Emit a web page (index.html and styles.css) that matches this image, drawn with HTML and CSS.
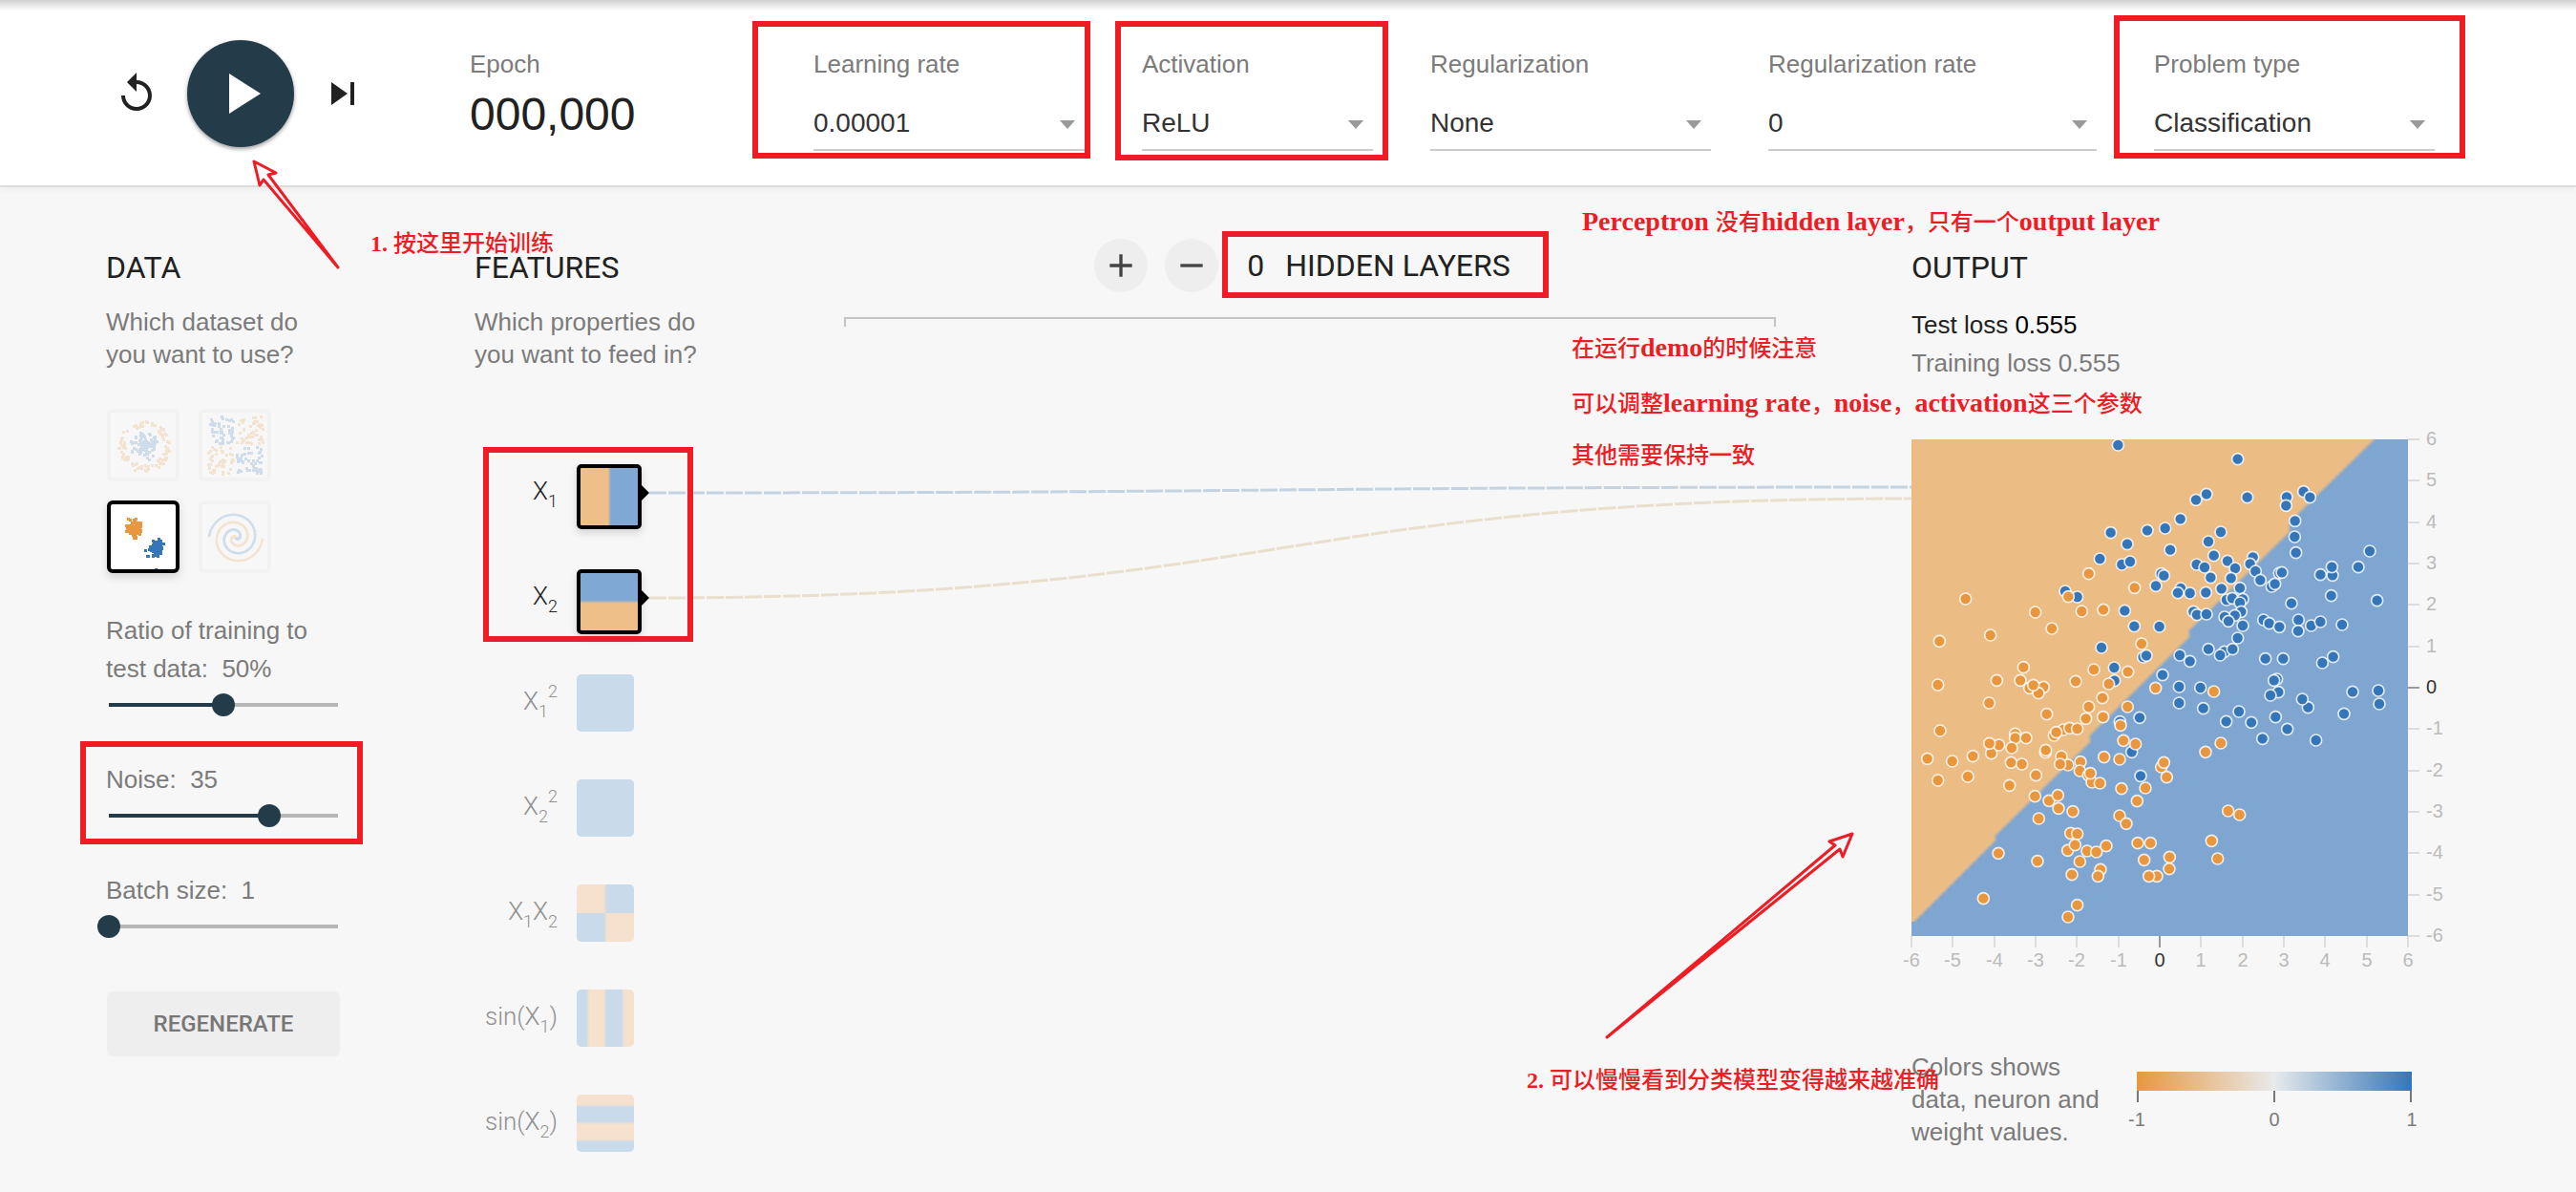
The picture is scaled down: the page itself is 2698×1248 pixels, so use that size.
FILE: index.html
```html
<!DOCTYPE html>
<html lang="en">
<head>
<meta charset="utf-8">
<title>Neural network playground</title>
<link rel="stylesheet" href="styles.css">
</head>
<body>
<header class="controls">
  <div class="player">
    <button class="icon-button" aria-label="Reset"><svg viewBox="0 0 24 24"><path d="M12 5V1L7 6l5 5V7c3.31 0 6 2.69 6 6s-2.69 6-6 6-6-2.69-6-6H4c0 4.42 3.58 8 8 8s8-3.58 8-8-3.58-8-8-8z"/></svg></button>
    <button class="play-button" aria-label="Run"><svg viewBox="0 0 24 24"><path d="M8 5v14l11-7z"/></svg></button>
    <button class="icon-button" aria-label="Step"><svg viewBox="0 0 24 24"><path d="M6 18l8.5-6L6 6v12zM16 6v12h2V6h-2z"/></svg></button>
  </div>
  <div class="field epoch">
    <span class="label">Epoch</span>
    <output class="epoch-value">000,000</output>
  </div>
  <div class="field rate">
    <label class="label" for="learning-rate">Learning rate</label>
    <div class="select"><select id="learning-rate"><option>0.00001</option></select></div>
  </div>
  <div class="field activation">
    <label class="label" for="activation">Activation</label>
    <div class="select"><select id="activation"><option>ReLU</option></select></div>
  </div>
  <div class="field regularization">
    <label class="label" for="regularization">Regularization</label>
    <div class="select"><select id="regularization"><option>None</option></select></div>
  </div>
  <div class="field regularization-rate">
    <label class="label" for="reg-rate">Regularization rate</label>
    <div class="select"><select id="reg-rate"><option>0</option></select></div>
  </div>
  <div class="field problem">
    <label class="label" for="problem">Problem type</label>
    <div class="select"><select id="problem"><option>Classification</option></select></div>
  </div>
</header>

<main class="playground">
  <section class="data">
    <h2 class="title">DATA</h2>
    <p class="hint">Which dataset do<br>you want to use?</p>
    <div class="datasets">
      <button class="dataset" aria-label="Circle"><svg id="data-circle" viewBox="0 0 68 68"></svg></button>
      <button class="dataset" aria-label="Exclusive or"><svg id="data-xor" viewBox="0 0 68 68"></svg></button>
      <button class="dataset selected" aria-label="Gaussian"><svg id="data-gauss" viewBox="0 0 68 68"></svg></button>
      <button class="dataset" aria-label="Spiral"><svg id="data-spiral" viewBox="0 0 68 68"></svg></button>
    </div>
    <div class="slider ratio">
      <label for="ratio">Ratio of training to<br>test data:&nbsp; 50%</label>
      <input id="ratio" type="range" min="0" max="100" value="50" style="--fill: 50%">
    </div>
    <div class="slider">
      <label for="noise">Noise:&nbsp; 35</label>
      <input id="noise" type="range" min="0" max="50" value="35" style="--fill: 70%">
    </div>
    <div class="slider">
      <label for="batch">Batch size:&nbsp; 1</label>
      <input id="batch" type="range" min="1" max="30" value="1" style="--fill: 0%">
    </div>
    <button class="regenerate">REGENERATE</button>
  </section>

  <section class="features">
    <h2 class="title">FEATURES</h2>
    <p class="hint">Which properties do<br>you want to feed in?</p>
    <ul class="feature-list">
      <li class="feature active"><span class="name">X<sub>1</sub></span><button class="node x1" aria-label="X1"></button></li>
      <li class="feature active"><span class="name">X<sub>2</sub></span><button class="node x2" aria-label="X2"></button></li>
      <li class="feature"><span class="name">X<sub>1</sub><sup>2</sup></span><button class="node" aria-label="X1 squared"></button></li>
      <li class="feature"><span class="name">X<sub>2</sub><sup>2</sup></span><button class="node" aria-label="X2 squared"></button></li>
      <li class="feature"><span class="name">X<sub>1</sub>X<sub>2</sub></span><button class="node product" aria-label="X1 times X2"></button></li>
      <li class="feature"><span class="name">sin(X<sub>1</sub>)</span><button class="node sin-x1" aria-label="sin X1"></button></li>
      <li class="feature"><span class="name">sin(X<sub>2</sub>)</span><button class="node sin-x2" aria-label="sin X2"></button></li>
    </ul>
  </section>

  <section class="network">
    <div class="layers">
      <div class="layer-controls">
        <button class="round-button" aria-label="Add layer"><svg viewBox="0 0 24 24"><path d="M19 13h-6v6h-2v-6H5v-2h6V5h2v6h6v2z"/></svg></button>
        <button class="round-button" aria-label="Remove layer"><svg viewBox="0 0 24 24"><path d="M19 13H5v-2h14v2z"/></svg></button>
        <span class="layer-count">0</span>
        <span>HIDDEN LAYERS</span>
      </div>
      <div class="bracket"></div>
    </div>
    <svg class="links" viewBox="0 0 1322 200" preserveAspectRatio="none">
      <path class="link positive" d="M0 56C661 56 661 50 1322 50"/>
      <path class="link negative" d="M0 166C661 166 661 62 1322 62"/>
    </svg>
  </section>

  <section class="output">
    <h2 class="title">OUTPUT</h2>
    <p class="loss test">Test loss <b>0.555</b></p>
    <p class="loss">Training loss 0.555</p>
    <svg class="heatmap" viewBox="0 0 520 520">
      <rect class="region-positive" width="520" height="520"/>
      <path class="region-negative" d="M0 0H485L406 77L396 88V97L291 200V207L187 310V317L88 415V420L3 505H0z"/>
      <path class="boundary" d="M485 0L406 77L396 88V97L291 200V207L187 310V317L88 415V420L3 505"/>
      <g id="axes"></g>
      <g id="points" transform="scale(0.333333)"></g>
    </svg>
    <div class="legend">
      <p class="legend-text">Colors shows<br>data, neuron and<br>weight values.</p>
      <div class="scale">
        <div class="scale-bar"></div>
        <div class="scale-ticks"></div>
        <div class="scale-labels"><span>-1</span><span>0</span><span>1</span></div>
      </div>
    </div>
  </section>
</main>

<div class="notes">
  <svg class="marks" viewBox="0 0 2698 1248">
    <g class="box">
      <rect x="791" y="25" width="348" height="138"/>
      <rect x="1171" y="25" width="280" height="140"/>
      <rect x="2217" y="19" width="362" height="144"/>
      <rect x="1283" y="245" width="336" height="64"/>
      <rect x="509" y="471" width="214" height="198"/>
      <rect x="87" y="779" width="290" height="102"/>
    </g>
    <g class="arrow">
      <path d="M266 169L289 181L281 183L354 280L276 188L272 194z"/>
      <path d="M1940 873L1916 881L1922 885L1683 1086L1927 889L1930 897z"/>
    </g>
  </svg>
  <p class="note note-start"><span class="number">1. </span>按这里开始训练</p>
  <p class="note note-perceptron"><span>Perceptron </span>没有<span>hidden layer</span>，只有一个<span>output layer</span></p>
  <p class="note note-demo">在运行<span>demo</span>的时候注意</p>
  <p class="note note-params">可以调整<span>learning rate</span>，<span>noise</span>，<span>activation</span>这三个参数</p>
  <p class="note note-same">其他需要保持一致</p>
  <p class="note note-result"><span class="number">2. </span>可以慢慢看到分类模型变得越来越准确</p>
</div>
<script src="script.js"></script>
</body>
</html>
```
FILE: styles.css
```css
* { box-sizing: border-box; }

body {
  margin: 0;
  position: relative;
  background: #f7f7f7;
  color: #7b7b7b;
  font-family: "Liberation Sans", Arial, sans-serif;
  font-size: 26px;
  line-height: 34px;
  overflow-x: hidden;
}

h2, p, ul { margin: 0; padding: 0; }
button { border: 0; padding: 0; font: inherit; cursor: pointer; }

/* top bar */
.controls {
  display: flex;
  align-items: flex-start;
  gap: 60px;
  padding: 42px 148px 36px 119px;
  background: linear-gradient(#d0d0d0, #e6e6e6 5px, #fff 12px);
  border-bottom: 2px solid #dcdcdc;
  box-shadow: 0 2px 8px rgba(0, 0, 0, 0.05);
}
.player {
  flex: 313 1 0;
  display: flex;
  align-items: center;
}
.icon-button { flex: none; width: 48px; height: 48px; background: none; }
.icon-button svg { display: block; fill: #212121; }
.play-button {
  flex: none;
  display: grid;
  place-items: center;
  width: 112px;
  height: 112px;
  margin: 0 27px 0 29px;
  border-radius: 50%;
  background: #243b4a;
  box-shadow: 0 2px 4px rgba(0, 0, 0, 0.4);
}
.play-button svg { width: 72px; fill: #fff; }
.field { padding-top: 8px; min-width: 0; }
.epoch { flex: 300 1 0; }
.rate { flex: 284 1 0; }
.activation { flex: 242 1 0; }
.regularization, .problem { flex: 294 1 0; }
.regularization-rate { flex: 344 1 0; }
.label { display: block; white-space: nowrap; }
.epoch-value {
  display: block;
  margin-top: 8px;
  color: #212121;
  font-size: 48px;
  line-height: 56px;
}
.select { position: relative; margin-top: 16px; }
.select select {
  display: block;
  width: 100%;
  height: 58px;
  padding: 0;
  border: 0;
  border-bottom: 2px solid #ccc;
  border-radius: 0;
  appearance: none;
  background: none;
  color: #333;
  font: 28px "Liberation Sans", Arial, sans-serif;
}
.select::after {
  content: "";
  position: absolute;
  top: 26px;
  right: 10px;
  border: 8px solid transparent;
  border-top: 9px solid #999;
  border-bottom: 0;
  pointer-events: none;
}

/* main columns */
.playground {
  display: grid;
  grid-template-columns: 386px 183px 1fr 524px;
  padding: 54px 172px 32px 111px;
}
.title {
  padding-top: 10px;
  color: #212121;
  font: 400 32px/40px Roboto, sans-serif;
}
.hint { margin-top: 20px; white-space: nowrap; }

/* data column */
.datasets {
  display: grid;
  grid-template-columns: 76px 76px;
  gap: 20px;
  margin: 40px 0 0 1px;
}
.dataset {
  width: 76px;
  height: 76px;
  border: 4px solid #f2f2f2;
  border-radius: 6px;
  background: none;
}
.dataset svg { display: block; opacity: 0.2; }
.dataset.selected {
  border-color: #000;
  background: #fff;
  box-shadow: 0 4px 10px rgba(0, 0, 0, 0.15);
}
.dataset.selected svg { opacity: 1; }
.pos { fill: #3576b8; }
.neg { fill: #e8973f; }

.slider { margin-top: 46px; }
.slider.ratio { margin-top: 40px; }
.slider label { display: block; line-height: 40px; }
.slider input {
  display: block;
  width: 264px;
  height: 24px;
  margin: 6px 0 0 -9px;
  appearance: none;
  background: linear-gradient(to right, #243b4a var(--fill), #b6b6b6 var(--fill)) center / calc(100% - 24px) 4px no-repeat;
}
.slider input::-webkit-slider-thumb {
  appearance: none;
  width: 24px;
  height: 24px;
  border-radius: 50%;
  background: #243b4a;
}
.regenerate {
  display: block;
  width: 244px;
  height: 68px;
  margin: 56px 0 0 1px;
  border-radius: 6px;
  background: #eee;
  color: #777;
  font: 500 24px/28px Roboto, sans-serif;
}

/* features column */
.feature-list {
  display: flex;
  flex-direction: column;
  gap: 42px;
  margin-top: 98px;
  list-style: none;
}
.feature {
  display: flex;
  align-items: flex-start;
  height: 68px;
  color: #909090;
}
.name {
  width: 87px;
  margin-right: 20px;
  font-family: Roboto, sans-serif;
  font-weight: 300;
  line-height: 56px;
  text-align: right;
}
.name sub, .name sup { font-size: 18px; line-height: 0; }
.name sub { vertical-align: -8px; }
.name sup { vertical-align: 13px; }
.node {
  width: 60px;
  height: 60px;
  border-radius: 5px;
  background: #c9daea;
}
.feature.active { color: #222; }
.active .node {
  width: 68px;
  height: 68px;
  border: 4px solid #000;
  box-shadow: 0 4px 8px rgba(0, 0, 0, 0.15);
}
.feature.active::after {
  content: "";
  margin-top: 22px;
  border: 8px solid transparent;
  border-left-color: #000;
  border-right: 0;
}
.x1 { background: linear-gradient(to right, #eebf88 48%, #80a8d4 53%); }
.x2 { background: linear-gradient(#80a8d4 47%, #eebf88 53%); }
.product {
  background:
    linear-gradient(to right, #f5e1cd 47%, #c9daea 53%) top / 100% 50% no-repeat,
    linear-gradient(to right, #c9daea 47%, #f5e1cd 53%) bottom / 100% 50% no-repeat;
}
.sin-x1 { background: linear-gradient(to right, #c9daea 17%, #f5e1cd 22%, #f5e1cd 47%, #c9daea 52%, #c9daea 78%, #f5e1cd 83%); }
.sin-x2 { background: linear-gradient(#f5e1cd 17%, #c9daea 22%, #c9daea 47%, #f5e1cd 52%, #f5e1cd 78%, #c9daea 83%); }

/* network column */
.layers { padding: 0 142px 0 204px; }
.layer-controls {
  display: flex;
  align-items: center;
  justify-content: center;
  padding-right: 16px;
  color: #212121;
  font: 400 32px/40px Roboto, sans-serif;
  white-space: nowrap;
}
.round-button {
  display: grid;
  place-items: center;
  width: 56px;
  height: 56px;
  margin-right: 18px;
  border-radius: 50%;
  background: #eee;
}
.round-button svg { width: 40px; fill: #444; }
.layer-count { margin: 0 22px 0 12px; }
.bracket {
  height: 10px;
  margin-top: 26px;
  border: 2px solid #c4c4c4;
  border-bottom: 0;
}
.links { display: block; width: 100%; height: 200px; margin-top: 118px; }
.link { fill: none; stroke-width: 3; stroke-dasharray: 18 2; }
.positive { stroke: #c3d3e1; }
.negative { stroke: #e9dfcd; }

/* output column */
.loss { line-height: 40px; }
.title + .loss { margin-top: 20px; }
.loss.test { color: #212121; }
.loss b { color: #000; font-weight: 400; }
.heatmap {
  display: block;
  width: 520px;
  height: 520px;
  margin-top: 60px;
  overflow: visible;
}
.region-positive { fill: #7ea6d0; }
.region-negative { fill: #ebbc84; }
.boundary { fill: none; stroke: #b5b1aa; stroke-width: 3; stroke-opacity: 0.6; }
.dot { stroke: #fff; stroke-width: 5; stroke-opacity: 0.82; }
.tick { stroke: #ddd; stroke-width: 2; }
.tick.zero { stroke: #999; }
.tick-label { fill: #bbb; font: 20px "Liberation Sans", Arial, sans-serif; }
.tick-label.zero { fill: #333; }
.legend { display: flex; margin-top: 120px; }
.legend-text { flex: 0 0 236px; white-space: nowrap; }
.scale { flex: 1; margin-top: 22px; }
.scale-bar { height: 20px; background: linear-gradient(to right, #e8973f, #e8eaeb 50%, #3576b8); }
.scale-ticks {
  height: 12px;
  border: 2px solid #777;
  border-width: 0 2px;
  background: linear-gradient(#777, #777) center / 2px 100% no-repeat;
}
.scale-labels {
  display: flex;
  justify-content: space-between;
  margin: 6px -10px 0;
  font-size: 20px;
  line-height: 24px;
}
.scale-labels span { width: 20px; text-align: center; }

/* red annotations drawn over the page */
.notes {
  position: absolute;
  top: 0;
  left: 0;
  width: 2698px;
  height: 1248px;
  pointer-events: none;
  color: #ee1c24;
}
.marks { display: block; width: 2698px; height: 1248px; }
.box { fill: none; stroke: #ee1c24; stroke-width: 6; }
.arrow { fill: none; stroke: #ee1c24; stroke-width: 3; stroke-linejoin: round; }
.note {
  position: absolute;
  font: 500 24px/32px "Noto Sans CJK SC", sans-serif;
  white-space: pre;
}
.note span { font: 700 28px/32px "Liberation Serif", "Times New Roman", serif; }
.note .number { font-size: 24px; }
.note-start { left: 388px; top: 237px; }
.note-perceptron { left: 1657px; top: 215px; }
.note-demo { left: 1646px; top: 347px; }
.note-params { left: 1646px; top: 405px; }
.note-same { left: 1646px; top: 459px; }
.note-result { left: 1599px; top: 1113px; }
```
FILE: script.js
```js
const NS = "http://www.w3.org/2000/svg";

function add(parent, tag, attrs, text) {
  const el = document.createElementNS(NS, tag);
  for (const key in attrs) el.setAttribute(key, attrs[key]);
  if (text !== undefined) el.textContent = text;
  parent.appendChild(el);
}

/* Samples, three units to the pixel, one block per quarter of the plot. */
const quarters = [
  { dx: -36, dy: -30,
    pos: "685,48 881,280 833,309 777,316 662,323 714,359 849,377 628,405 697,423 723,414 821,452 829,458 804,490 882,498 873,512 519,507 557,525 706,568 736,617 815,618 633,684 764,714 774,709 879,708 673,747 674,788 825,770 877,807",
    neg: "593,452 737,496 206,531 529,524 425,573 571,570 639,565 477,624 284,645 124,664 759,672 388,746 609,753 716,760 304,787 378,787 119,801 552,790 407,811 451,808 435,827 419,802 656,798 803,811 636,842" },
  { dx: 804, dy: -30,
    pos: "221,92 123,202 90,220 251,212 375,211 373,238 428,194 448,212 401,286 400,336 404,386 168,321 129,351 146,395 189,412 213,435 269,400 260,421 277,444 92,423 117,432 136,464 200,466 292,472 352,450 360,448 328,492 338,484 71,513 121,511 170,499 228,497 186,534 204,529 237,532 228,543 82,571 93,581 123,579 232,571 212,583 180,588 192,601 237,615 221,654 390,545 302,597 320,608 352,619 412,597 411,632 452,615 481,603 549,612 481,455 519,457 517,431 600,431 636,381 515,521 659,536 129,689 179,697 166,708 205,689 71,727 308,719 364,719 487,732 521,713 344,783 335,787 104,810 349,824 324,834 582,823 663,819",
    neg: "146,822" },
  { dx: -36, dy: 780,
    pos: "691,107 753,94 728,202 756,277 877,48",
    neg: "280,48 126,135 461,83 593,60 584,97 638,92 715,60 362,145 362,158 396,158 351,189 287,206 311,180 281,175 229,215 164,231 86,223 119,291 213,279 344,307 349,235 383,240 427,275 457,203 458,196 484,150 513,132 491,140 533,127 557,129 507,216 528,243 503,240 567,233 565,261 592,275 603,297 598,269 628,300 424,341 468,355 496,338 498,379 543,389 436,411 641,218 690,225 693,118 740,177 702,166 696,317 771,315 745,356 821,249 829,235 838,281 690,402 711,427 747,488 787,488 767,541 847,532 846,569 807,592 782,592 536,457 557,459 527,511 550,494 588,513 617,516 648,497 565,546 540,587 630,571 622,592 432,545 309,520 262,662 557,683 528,720" },
  { dx: 804, dy: 780,
    pos: "113,65 225,75 185,106 264,109 340,92 442,62 424,36 377,130 299,160 467,165 555,82 666,51",
    neg: "120,202 168,174 191,387 227,399 139,481 158,537" }
];
const points = document.getElementById("points");
for (const q of quarters) {
  for (const kind of ["pos", "neg"]) {
    for (const pair of q[kind].split(" ")) {
      const [x, y] = pair.split(",").map(Number);
      add(points, "circle", { class: "dot " + kind, cx: x + q.dx, cy: y + q.dy, r: 18 });
    }
  }
}

/* Axis ticks and labels */
const axes = document.getElementById("axes");
for (let v = -6; v <= 6; v++) {
  const at = Math.round((v + 6) * 520 / 12);
  const zero = v === 0 ? " zero" : "";
  add(axes, "line", { class: "tick" + zero, x1: at, x2: at, y1: 520, y2: 532 });
  add(axes, "text", { class: "tick-label" + zero, x: at, y: 552, "text-anchor": "middle" }, v);
  add(axes, "line", { class: "tick" + zero, x1: 520, x2: 532, y1: 520 - at, y2: 520 - at });
  add(axes, "text", { class: "tick-label" + zero, x: 539, y: 526 - at }, v);
}

/* Dataset thumbnails */
let seed = 7;
function random() {
  seed = (seed * 16807) % 2147483647;
  return seed / 2147483647;
}
function normal() {
  return Math.sqrt(-2 * Math.log(1 - random())) * Math.cos(2 * Math.PI * random());
}
function speck(id, kind, x, y) {
  add(document.getElementById(id), "rect", { class: kind, x: Math.round(x) - 1, y: Math.round(y) - 1, width: 3, height: 3 });
}
for (let i = 0; i < 100; i++) {
  const a = random() * 2 * Math.PI, b = random() * 2 * Math.PI;
  const inner = random() * 15, outer = 20 + random() * 7;
  speck("data-circle", "pos", 35 + inner * Math.cos(a), 35 + inner * Math.sin(a));
  speck("data-circle", "neg", 35 + outer * Math.cos(b), 35 + outer * Math.sin(b));
}
for (let i = 0; i < 200; i++) {
  const sx = random() < 0.5 ? -1 : 1, sy = random() < 0.5 ? -1 : 1;
  speck("data-xor", sx * sy > 0 ? "pos" : "neg", 34 + sx * (2 + random() * 27), 34 + sy * (2 + random() * 28));
}
for (let i = 0; i < 100; i++) {
  speck("data-gauss", "neg", 24 + normal() * 4, 24 + normal() * 4);
  speck("data-gauss", "pos", 47 + normal() * 4, 46 + normal() * 4);
}
for (let i = 0; i < 160; i++) {
  const r = i / 160 * 28, t = 1.75 * i / 160 * 2 * Math.PI;
  for (const [kind, s] of [["pos", 1], ["neg", -1]]) {
    add(document.getElementById("data-spiral"), "circle", { class: kind, cx: 35 + s * r * Math.sin(t), cy: 35 + s * r * Math.cos(t), r: 1.3 });
  }
}
```
